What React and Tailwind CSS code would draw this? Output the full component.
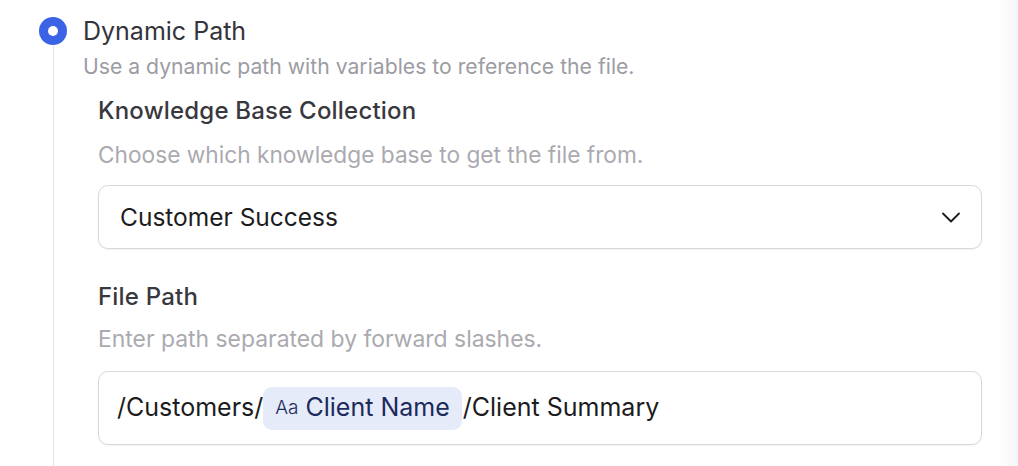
export default function App() {
  return (
    <div
      className="flex h-[466px] w-full overflow-hidden bg-white"
      style={{ fontFamily: "Inter, 'Noto Sans', sans-serif" }}
    >
      <main className="flex-1 pl-[39px] pt-[17px]">
        {/* Option header */}
        <div className="flex items-center gap-[16px]">
          <span className="flex h-[28px] w-[28px] items-center justify-center rounded-full bg-[#3a63e6]">
            <span className="h-[10px] w-[10px] rounded-full bg-white" />
          </span>
          <span className="text-[25px] leading-[28px] text-[#34343a]">Dynamic Path</span>
        </div>

        {/* Option body with guide line */}
        <div className="ml-[14px] border-l border-[#e4e4e7] pb-[40px] pl-[29px] pt-[8px]">
          <p className="text-[21.2px] leading-[26px] text-[#9c9ca3]">
            Use a dynamic path with variables to reference the file.
          </p>

          <div className="mr-[16px] pl-[15px]">
            {/* Knowledge base select */}
            <div className="mt-[17px]">
              <label className="block text-[24px] font-medium leading-[30px] tracking-[0.2px] text-[#38383e]">
                Knowledge Base Collection
              </label>
              <p className="mt-[15px] text-[22.7px] leading-[28px] text-[#aaaab0]">
                Choose which knowledge base to get the file from.
              </p>
              <button className="mt-[16px] flex h-[64px] w-full items-center justify-between rounded-[10px] border border-[#d8d8dc] bg-white pl-[21px] pr-[18px] shadow-[0_1px_2px_rgba(0,0,0,0.05)]">
                <span className="text-[24.5px] text-[#1c1c20]">Customer Success</span>
                <svg width="24" height="24" viewBox="0 0 24 24" fill="none" stroke="#1c1c20" strokeWidth="1.8" strokeLinecap="round" strokeLinejoin="round">
                  <path d="M4 8.5l8 8 8-8" />
                </svg>
              </button>
            </div>

            {/* File path input */}
            <div className="mt-[33px]">
              <label className="block text-[24px] font-medium leading-[30px] tracking-[0.2px] text-[#38383e]">
                File Path
              </label>
              <p className="mt-[13px] text-[22.9px] leading-[28px] text-[#aaaab0]">
                Enter path separated by forward slashes.
              </p>
              <div className="mt-[18px] flex h-[74px] w-full items-center rounded-[10px] border border-[#d8d8dc] bg-white pl-[18px] text-[25px] text-[#1c1c20] shadow-[0_1px_2px_rgba(0,0,0,0.05)]">
                <span>/Customers/</span>
                <span className="mr-[1px] flex h-[43px] items-center gap-[7px] rounded-[9px] bg-[#e5ebf9] pl-[12px] pr-[12px] text-[#1d2a5c]">
                  <span className="text-[19px] font-light">Aa</span>
                  <span>Client Name</span>
                </span>
                <span>/Client Summary</span>
              </div>
            </div>
          </div>
        </div>
      </main>
      <div className="w-[20px] bg-gradient-to-r from-white to-[#f5f5f7]" />
    </div>
  );
}
